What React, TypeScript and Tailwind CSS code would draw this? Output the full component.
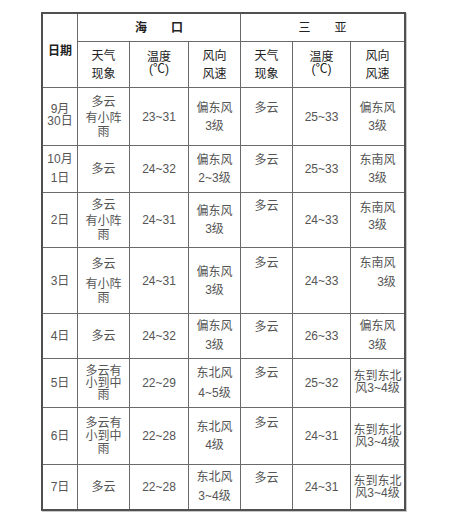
import React from "react";

const C = ({ children, className = "" }: { children?: React.ReactNode; className?: string }) => (
  <div className={"bg-white flex flex-col items-center text-center " + className}>{children}</div>
);

const B = () => <div>&nbsp;</div>;

export default function App() {
  return (
    <div className="bg-white w-[450px] h-[521px] pt-[12px] pl-[41px] font-[family-name:'Liberation_Sans','Noto_Sans_CJK_SC',sans-serif]">
      <div className="grid w-fit grid-cols-[34px_51px_58px_51px_51px_57px_53px] grid-rows-[27px_45px_57px_46px_54px_65px_44px_48px_56px_44px] gap-px bg-[#6a6a6a] border-2 border-[#505050] text-[12px] text-[#555] shadow-[1px_1px_0_#c8c8c8]">
        {/* header */}
        <C className="row-span-2 justify-center font-bold text-[#222] leading-[14px]">日期</C>
        <C className="col-span-3 justify-center font-bold text-[#222] leading-[14px]">海　　口</C>
        <C className="col-span-3 justify-center text-[#222] leading-[14px]">三　　亚</C>
        <C className="justify-center text-[#222] leading-[18px]"><div>天气</div><div>现象</div></C>
        <C className="justify-center text-[#222] leading-[12px] pb-[3px]"><div className="w-[27px]">温度(℃)</div></C>
        <C className="justify-center text-[#222] leading-[18px]"><div>风向</div><div>风速</div></C>
        <C className="justify-center text-[#222] leading-[18px]"><div>天气</div><div>现象</div></C>
        <C className="justify-center text-[#222] leading-[12px] pb-[3px]"><div className="w-[27px]">温度(℃)</div></C>
        <C className="justify-center text-[#222] leading-[18px]"><div>风向</div><div>风速</div></C>

        {/* 9月30日 */}
        <C className="justify-center leading-[12px] pb-[3px]"><div className="w-[26px]">9月30日</div></C>
        <C className="justify-center leading-[14px]"><div>多云</div><div className="mt-[2px] w-[40px]">有小阵雨</div></C>
        <C className="justify-center">23~31</C>
        <C className="justify-center leading-[18px]"><div>偏东风</div><div>3级</div></C>
        <C className="justify-center leading-[18px]"><div>多云</div><B /></C>
        <C className="justify-center">25~33</C>
        <C className="justify-center leading-[18px]"><div>偏东风</div><div>3级</div></C>

        {/* 10月1日 */}
        <C className="justify-center leading-[19px]"><div>10月</div><div>1日</div></C>
        <C className="justify-center">多云</C>
        <C className="justify-center">24~32</C>
        <C className="justify-center leading-[18px]"><div>偏东风</div><div>2~3级</div></C>
        <C className="justify-center leading-[18px]"><div>多云</div><B /></C>
        <C className="justify-center">25~33</C>
        <C className="justify-center leading-[18px]"><div>东南风</div><div>3级</div></C>

        {/* 2日 */}
        <C className="justify-center">2日</C>
        <C className="justify-center leading-[14px]"><div>多云</div><div className="mt-[2px] w-[40px]">有小阵雨</div></C>
        <C className="justify-center">24~31</C>
        <C className="justify-center leading-[18px]"><div>偏东风</div><div>3级</div></C>
        <C className="justify-center leading-[14px]"><div>多云</div><B /><B /></C>
        <C className="justify-center">24~33</C>
        <C className="justify-center leading-[17px] pb-[7px]"><div>东南风</div><div>3级</div></C>

        {/* 3日 */}
        <C className="justify-center">3日</C>
        <C className="justify-center leading-[14px]"><div>多云</div><div className="mt-[6px] w-[40px]">有小阵雨</div></C>
        <C className="justify-center">24~31</C>
        <C className="justify-center leading-[18px]"><div>偏东风</div><div>3级</div></C>
        <C className="justify-start pt-[6px] leading-[18px]"><div>多云</div></C>
        <C className="justify-center">24~33</C>
        <C className="justify-start pt-[6px] leading-[19px]"><div>东南风</div><div className="pl-[18px]">3级</div></C>

        {/* 4日 */}
        <C className="justify-center">4日</C>
        <C className="justify-center">多云</C>
        <C className="justify-center">24~32</C>
        <C className="justify-center leading-[19px]"><div>偏东风</div><div>3级</div></C>
        <C className="justify-center leading-[18px]"><div>多云</div><B /></C>
        <C className="justify-center">26~33</C>
        <C className="justify-center leading-[19px]"><div>偏东风</div><div>3级</div></C>

        {/* 5日 */}
        <C className="justify-center">5日</C>
        <C className="justify-center leading-[12px]"><div className="w-[40px]">多云有小到中雨</div></C>
        <C className="justify-center">22~29</C>
        <C className="justify-center leading-[20px]"><div>东北风</div><div>4~5级</div></C>
        <C className="justify-center leading-[20px]"><div>多云</div><B /></C>
        <C className="justify-center">25~32</C>
        <C className="justify-center leading-[12px] pb-[2px]"><div className="w-[50px]">东到东北风3~4级</div></C>

        {/* 6日 */}
        <C className="justify-center">6日</C>
        <C className="justify-center leading-[13px]"><div className="w-[40px]">多云有小到中雨</div></C>
        <C className="justify-center">22~28</C>
        <C className="justify-center leading-[18px]"><div>东北风</div><div>4级</div></C>
        <C className="justify-center leading-[13px]"><div>多云</div><B /><B /></C>
        <C className="justify-center">24~31</C>
        <C className="justify-center leading-[12px]"><div className="w-[50px]">东到东北风3~4级</div></C>

        {/* 7日 */}
        <C className="justify-center">7日</C>
        <C className="justify-center">多云</C>
        <C className="justify-center">22~28</C>
        <C className="justify-center leading-[19px]"><div>东北风</div><div>3~4级</div></C>
        <C className="justify-center leading-[18px]"><div>多云</div><B /></C>
        <C className="justify-center">24~31</C>
        <C className="justify-center leading-[12px]"><div className="w-[50px]">东到东北风3~4级</div></C>
      </div>
    </div>
  );
}
